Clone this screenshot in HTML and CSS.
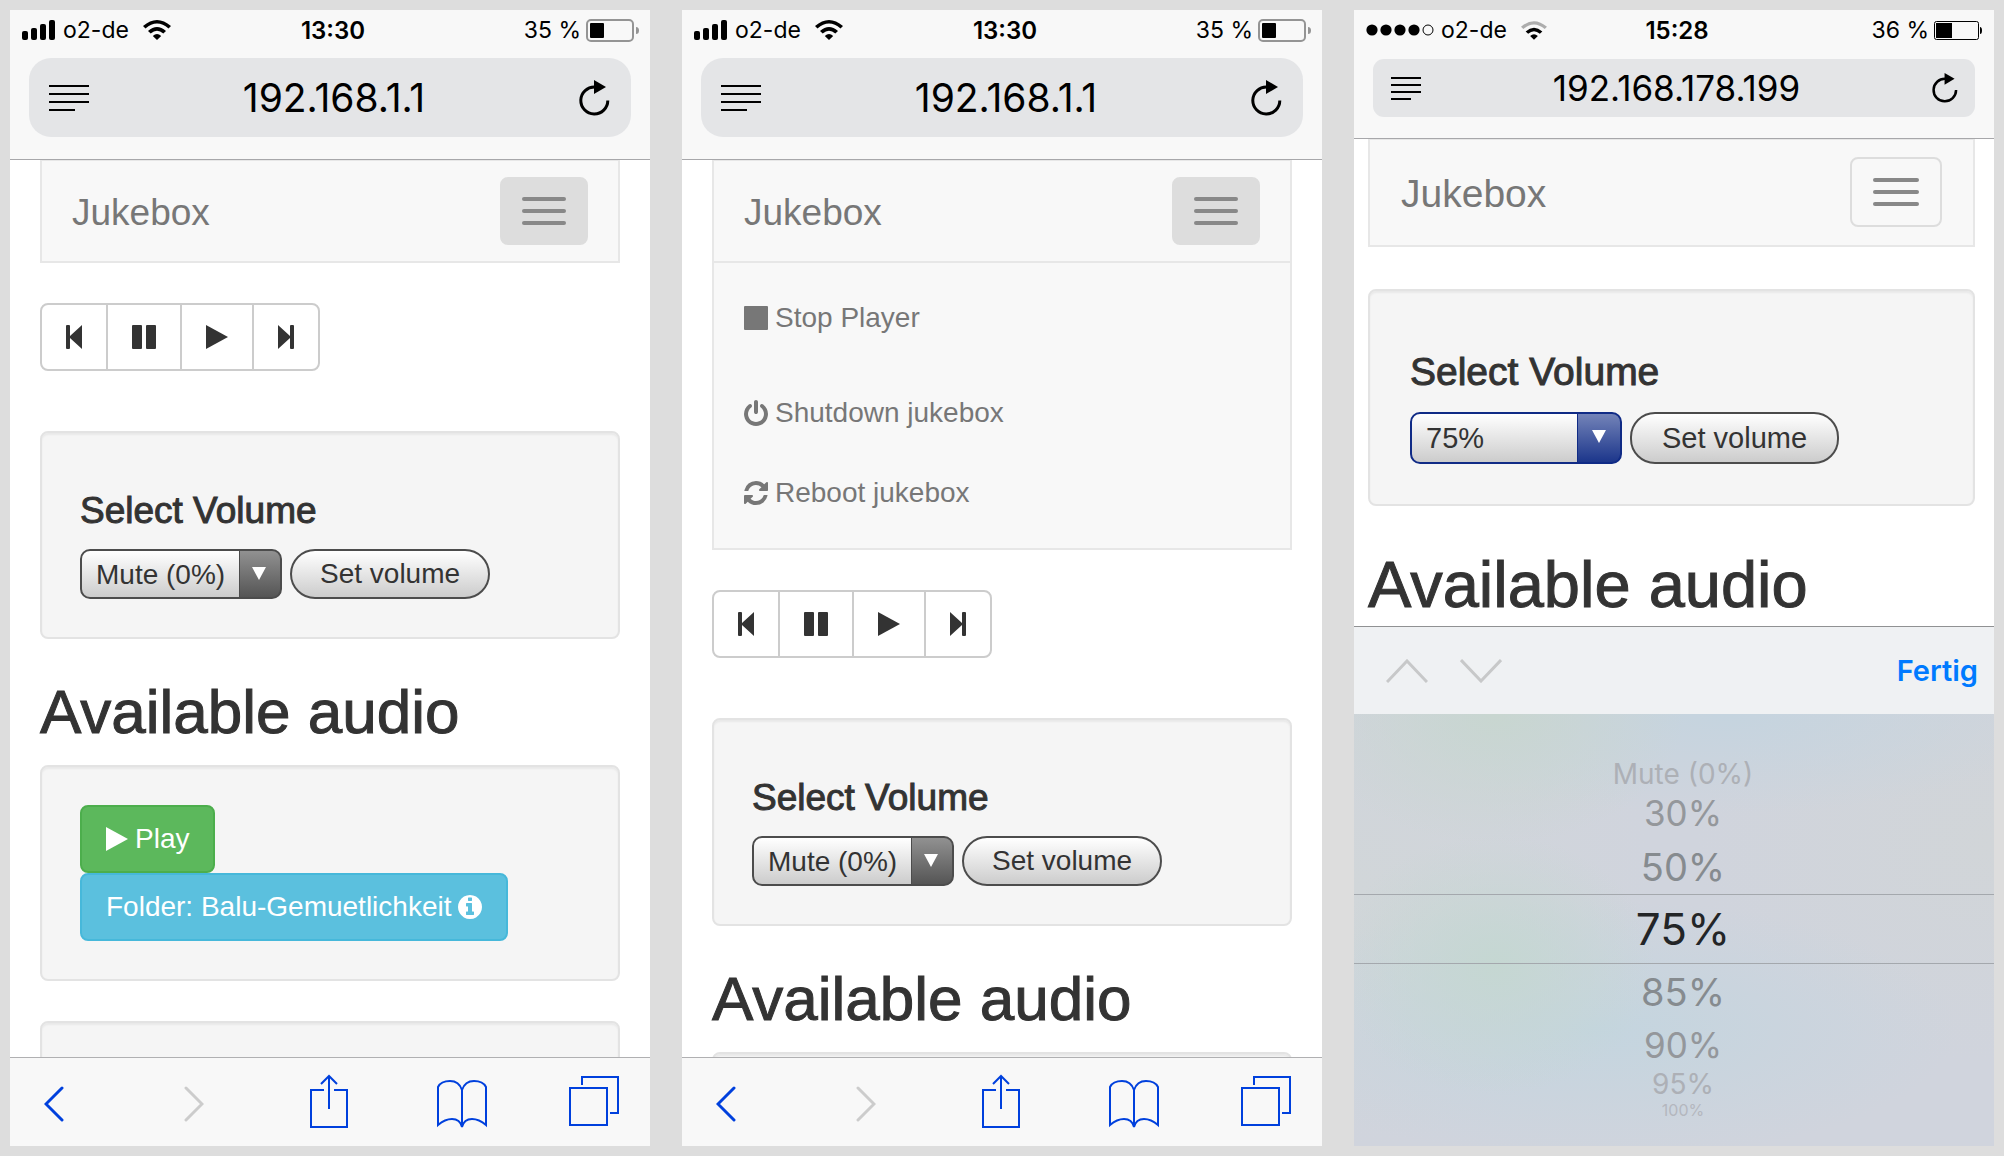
FILE: index.html
```html
<!DOCTYPE html>
<html lang="en">
<head>
<meta charset="utf-8">
<meta name="viewport" content="width=device-width, initial-scale=1">
<title>Jukebox</title>
<link rel="stylesheet" href="styles.css">
</head>
<body>
<svg class="sprite" aria-hidden="true">
  <symbol id="signal" viewBox="0 0 34 20"><rect x="0" y="11" width="6" height="9" rx="2"/><rect x="9" y="8" width="6" height="12" rx="2"/><rect x="18" y="4" width="6" height="16" rx="2"/><rect x="27" y="0" width="6" height="20" rx="2"/></symbol>
  <symbol id="dots" viewBox="0 0 68 12"><circle cx="6" cy="6" r="5.600"/><circle cx="20" cy="6" r="5.600"/><circle cx="34" cy="6" r="5.600"/><circle cx="48" cy="6" r="5.600"/><circle cx="62" cy="6" r="5" fill="none" stroke="currentColor"/></symbol>
  <symbol id="wifi" viewBox="0 0 28 20"><path d="M0 6Q14-6 28 6L25.500 8.500Q14-1.500 2.500 8.500ZM5 11Q14 3 23 11L20.300 13.500Q14 8 7.700 13.500ZM9.800 16Q14 12 18.200 16L14 20Z"/></symbol>
  <symbol id="wifi-low" viewBox="0 0 28 20"><path opacity=".3" d="M0 6Q14-6 28 6L25.500 8.500Q14-1.500 2.500 8.500Z"/><path d="M5 11Q14 3 23 11L20.300 13.500Q14 8 7.700 13.500ZM9.800 16Q14 12 18.200 16L14 20Z"/></symbol>
  <symbol id="battery" viewBox="0 0 53 23"><rect x="1" y="1" width="46" height="21" rx="4" fill="none" stroke="#949494" stroke-width="2"/><rect x="4" y="4" width="14" height="15" rx="1"/><path d="M50 8Q53 8 53 11.500Q53 15 50 15Z" fill="#949494"/></symbol>
  <symbol id="battery-thin" viewBox="0 0 49 19"><rect x=".5" y=".5" width="44" height="18" rx="2" fill="none" stroke="currentColor"/><rect x="2" y="2" width="16" height="15"/><path d="M46 6Q48 6 48 9.500Q48 13 46 13Z"/></symbol>
  <symbol id="reader" viewBox="0 0 40 28"><path d="M0 1h40v2H0zM0 9h40v2H0zM0 17h40v2H0zM0 25h26v2H0z"/></symbol>
  <symbol id="reader-small" viewBox="0 0 30 23"><path d="M0 0h30v2H0zM0 7h30v2H0zM0 14h30v2H0zM0 21h20v2H0z"/></symbol>
  <symbol id="reload" viewBox="0 0 31 36"><path d="M16 7A13.500 13.500 0 1 0 28.800 20.500" fill="none" stroke="currentColor" stroke-width="3"/><path d="M15 0L27 7L15 14Z"/></symbol>
  <symbol id="step-back" viewBox="0 0 16 24"><path d="M0 1Q0 0 1 0H3Q4 0 4 1V11L16 0V24L4 13V23Q4 24 3 24H1Q0 24 0 23Z"/></symbol>
  <symbol id="pause" viewBox="0 0 24 24"><rect width="10" height="24" rx="1"/><rect x="14" width="10" height="24" rx="1"/></symbol>
  <symbol id="play" viewBox="0 0 22 24"><path d="M0 0L22 12L0 24Z"/></symbol>
  <symbol id="step-fwd" viewBox="0 0 16 24"><path d="M16 1Q16 0 15 0H13Q12 0 12 1V11L0 0V24L12 13V23Q12 24 13 24H15Q16 24 16 23Z"/></symbol>
  <symbol id="stop" viewBox="0 0 24 24"><rect width="24" height="24" rx="1"/></symbol>
  <symbol id="power" viewBox="128 0 1536 1664"><path d="M1664 896q0 156-61 298t-164 245-245 164-298 61-298-61-245-164-164-245-61-298q0-182 80.500-343t226.500-270q43-32 95.500-25t83.500 50q32 42 24.500 94.500t-49.500 84.500q-98 74-151.500 181t-53.500 228q0 104 40.500 198.500t109.500 163.500 163.500 109.500 198.500 40.500 198.500-40.500 163.500-109.500 109.500-163.500 40.500-198.500q0-121-53.500-228t-151.500-181q-42-32-49.500-84.500t24.500-94.500q31-43 84-50t95 25q146 109 226.500 270t80.500 343zm-640-768v640q0 52-38 90t-90 38-90-38-38-90v-640q0-52 38-90t90-38 90 38 38 90z"/></symbol>
  <symbol id="refresh" viewBox="128 128 1536 1536"><path d="M1639 1056q0 5-1 7-64 268-268 434.500t-478 166.500q-146 0-282.500-55t-243.500-157l-129 129q-19 19-45 19t-45-19-19-45v-448q0-26 19-45t45-19h448q26 0 45 19t19 45-19 45l-137 137q71 66 161 102t187 36q134 0 250-65t186-179q11-17 53-117 8-23 30-23h192q13 0 22.500 9.500t9.500 22.500zm25-800v448q0 26-19 45t-45 19h-448q-26 0-45-19t-19-45 19-45l138-138q-148-137-349-137-134 0-250 65t-186 179q-11 17-53 117-8 23-30 23h-199q-13 0-22.500-9.500t-9.500-22.500v-7q65-268 270-434.500t480-166.500q146 0 284 55.500t245 156.500l130-129q19-19 45-19t45 19 19 45z"/></symbol>
  <symbol id="info" viewBox="128 128 1536 1536"><path d="M1152 1376v-160q0-14-9-23t-23-9h-96v-512q0-14-9-23t-23-9h-320q-14 0-23 9t-9 23v160q0 14 9 23t23 9h96v320h-96q-14 0-23 9t-9 23v160q0 14 9 23t23 9h448q14 0 23-9t9-23zm-128-896v-160q0-14-9-23t-23-9h-192q-14 0-23 9t-9 23v160q0 14 9 23t23 9h192q14 0 23-9t9-23zm640 416q0 209-103 385.500t-279.500 279.500-385.500 103-385.500-103-279.500-279.500-103-385.500 103-385.500 279.500-279.500 385.500-103 385.500 103 279.500 279.500 103 385.500z"/></symbol>
  <symbol id="back" viewBox="0 0 20 36"><path d="M18 2L2 18L18 34" fill="none" stroke="currentColor" stroke-width="3" stroke-linecap="round"/></symbol>
  <symbol id="forward" viewBox="0 0 20 36"><path d="M2 2L18 18L2 34" fill="none" stroke="currentColor" stroke-width="3" stroke-linecap="round"/></symbol>
  <symbol id="share" viewBox="0 0 38 54"><path d="M14 16H1V53H37V16H24M19 35V2M11 10L19 2L27 10" fill="none" stroke="currentColor" stroke-width="2"/></symbol>
  <symbol id="book" viewBox="0 0 50 49"><path d="M25 10V47M25 10Q22 1 13 1Q4 1 1 7V45Q8 39 15 39Q23 39 25 47Q27 39 35 39Q42 39 49 45V7Q46 1 37 1Q28 1 25 10" fill="none" stroke="currentColor" stroke-width="2"/></symbol>
  <symbol id="tabs" viewBox="0 0 50 50"><path d="M1 12H38V49H1ZM13 9V1H49V37H41" fill="none" stroke="currentColor" stroke-width="2"/></symbol>
  <symbol id="chev-up" viewBox="0 0 42 24"><path d="M1 23L21 2L41 23" fill="none" stroke="currentColor" stroke-width="3"/></symbol>
  <symbol id="chev-down" viewBox="0 0 42 24"><path d="M1 1L21 22L41 1" fill="none" stroke="currentColor" stroke-width="3"/></symbol>
  <symbol id="caret" viewBox="0 0 14 13"><path d="M0 0H14L7 13Z"/></symbol>
</svg>

<main class="phones">
  <section class="phone" aria-label="Player">
    <header class="browser">
      <div class="status">
        <div class="status-side"><svg class="icon" width="34" height="20"><use href="#signal"/></svg><span>o2-de</span><svg class="icon wifi" width="28" height="20"><use href="#wifi"/></svg></div>
        <time class="clock">13:30</time>
        <div class="status-side status-end"><span>35 %</span><svg class="icon" width="53" height="23"><use href="#battery"/></svg></div>
      </div>
      <div class="address">
        <button class="plain" aria-label="Reader view"><svg class="icon" width="40" height="28"><use href="#reader"/></svg></button>
        <span>192.168.1.1</span>
        <button class="plain" aria-label="Reload"><svg class="icon" width="31" height="36"><use href="#reload"/></svg></button>
      </div>
    </header>
    <div class="page">
      <nav class="navbar">
        <div class="navbar-head">
          <a class="brand" href="#">Jukebox</a>
          <button class="toggle toggle-active" aria-label="Toggle navigation"><span class="bar"></span><span class="bar"></span><span class="bar"></span></button>
        </div>
      </nav>
      <div class="controls">
        <button class="control" aria-label="Previous"><svg class="icon" width="16" height="24"><use href="#step-back"/></svg></button>
        <button class="control" aria-label="Pause"><svg class="icon" width="24" height="24"><use href="#pause"/></svg></button>
        <button class="control" aria-label="Play"><svg class="icon" width="22" height="24"><use href="#play"/></svg></button>
        <button class="control" aria-label="Next"><svg class="icon" width="16" height="24"><use href="#step-fwd"/></svg></button>
      </div>
      <form class="well">
        <label class="well-title" for="volume-1">Select Volume</label>
        <div class="volume">
          <span class="select-wrap"><select class="select" id="volume-1"><option>Mute (0%)</option><option>30%</option><option>50%</option><option>75%</option></select><svg class="caret" width="14" height="13" aria-hidden="true"><use href="#caret"/></svg></span>
          <button class="set" type="button">Set volume</button>
        </div>
      </form>
      <h2 class="heading">Available audio</h2>
      <div class="well well-audio">
        <button class="btn btn-play"><svg class="icon" width="22" height="24"><use href="#play"/></svg>Play</button>
        <button class="btn btn-folder">Folder: Balu-Gemuetlichkeit<svg class="icon" width="24" height="24"><use href="#info"/></svg></button>
      </div>
      <div class="well well-next"></div>
    </div>
    <footer class="toolbar">
      <button class="plain tool" aria-label="Back"><svg class="icon" width="20" height="36"><use href="#back"/></svg></button>
      <button class="plain tool tool-off" aria-label="Forward" disabled><svg class="icon" width="20" height="36"><use href="#forward"/></svg></button>
      <button class="plain tool tool-raised" aria-label="Share"><svg class="icon" width="38" height="54"><use href="#share"/></svg></button>
      <button class="plain tool" aria-label="Bookmarks"><svg class="icon" width="50" height="49"><use href="#book"/></svg></button>
      <button class="plain tool tool-raised" aria-label="Tabs"><svg class="icon" width="50" height="50"><use href="#tabs"/></svg></button>
    </footer>
  </section>

  <section class="phone" aria-label="Menu">
    <header class="browser">
      <div class="status">
        <div class="status-side"><svg class="icon" width="34" height="20"><use href="#signal"/></svg><span>o2-de</span><svg class="icon wifi" width="28" height="20"><use href="#wifi"/></svg></div>
        <time class="clock">13:30</time>
        <div class="status-side status-end"><span>35 %</span><svg class="icon" width="53" height="23"><use href="#battery"/></svg></div>
      </div>
      <div class="address">
        <button class="plain" aria-label="Reader view"><svg class="icon" width="40" height="28"><use href="#reader"/></svg></button>
        <span>192.168.1.1</span>
        <button class="plain" aria-label="Reload"><svg class="icon" width="31" height="36"><use href="#reload"/></svg></button>
      </div>
    </header>
    <div class="page">
      <nav class="navbar">
        <div class="navbar-head">
          <a class="brand" href="#">Jukebox</a>
          <button class="toggle toggle-active" aria-label="Toggle navigation"><span class="bar"></span><span class="bar"></span><span class="bar"></span></button>
        </div>
        <div class="menu">
          <ul class="menu-list">
            <li><a class="menu-link" href="#"><svg class="icon" width="24" height="24"><use href="#stop"/></svg>Stop Player</a></li>
          </ul>
          <ul class="menu-list">
            <li><a class="menu-link" href="#"><svg class="icon" width="24" height="26"><use href="#power"/></svg>Shutdown jukebox</a></li>
            <li><a class="menu-link" href="#"><svg class="icon" width="24" height="24"><use href="#refresh"/></svg>Reboot jukebox</a></li>
          </ul>
        </div>
      </nav>
      <div class="controls">
        <button class="control" aria-label="Previous"><svg class="icon" width="16" height="24"><use href="#step-back"/></svg></button>
        <button class="control" aria-label="Pause"><svg class="icon" width="24" height="24"><use href="#pause"/></svg></button>
        <button class="control" aria-label="Play"><svg class="icon" width="22" height="24"><use href="#play"/></svg></button>
        <button class="control" aria-label="Next"><svg class="icon" width="16" height="24"><use href="#step-fwd"/></svg></button>
      </div>
      <form class="well">
        <label class="well-title" for="volume-2">Select Volume</label>
        <div class="volume">
          <span class="select-wrap"><select class="select" id="volume-2"><option>Mute (0%)</option><option>30%</option><option>50%</option><option>75%</option></select><svg class="caret" width="14" height="13" aria-hidden="true"><use href="#caret"/></svg></span>
          <button class="set" type="button">Set volume</button>
        </div>
      </form>
      <h2 class="heading">Available audio</h2>
      <div class="well well-next"></div>
    </div>
    <footer class="toolbar">
      <button class="plain tool" aria-label="Back"><svg class="icon" width="20" height="36"><use href="#back"/></svg></button>
      <button class="plain tool tool-off" aria-label="Forward" disabled><svg class="icon" width="20" height="36"><use href="#forward"/></svg></button>
      <button class="plain tool tool-raised" aria-label="Share"><svg class="icon" width="38" height="54"><use href="#share"/></svg></button>
      <button class="plain tool" aria-label="Bookmarks"><svg class="icon" width="50" height="49"><use href="#book"/></svg></button>
      <button class="plain tool tool-raised" aria-label="Tabs"><svg class="icon" width="50" height="50"><use href="#tabs"/></svg></button>
    </footer>
  </section>

  <section class="phone phone-picker" aria-label="Volume picker">
    <header class="browser">
      <div class="status">
        <div class="status-side"><svg class="icon" width="68" height="12"><use href="#dots"/></svg><span>o2-de</span><svg class="icon wifi" width="26" height="19"><use href="#wifi-low"/></svg></div>
        <time class="clock">15:28</time>
        <div class="status-side status-end"><span>36 %</span><svg class="icon" width="49" height="19"><use href="#battery-thin"/></svg></div>
      </div>
      <div class="address">
        <button class="plain" aria-label="Reader view"><svg class="icon" width="30" height="23"><use href="#reader-small"/></svg></button>
        <span>192.168.178.199</span>
        <button class="plain" aria-label="Reload"><svg class="icon" width="26" height="30"><use href="#reload"/></svg></button>
      </div>
    </header>
    <div class="page">
      <nav class="navbar">
        <div class="navbar-head">
          <a class="brand" href="#">Jukebox</a>
          <button class="toggle" aria-label="Toggle navigation"><span class="bar"></span><span class="bar"></span><span class="bar"></span></button>
        </div>
      </nav>
      <form class="well">
        <label class="well-title" for="volume-3">Select Volume</label>
        <div class="volume">
          <span class="select-wrap"><select class="select" id="volume-3"><option>75%</option><option>85%</option><option>90%</option></select><svg class="caret" width="14" height="13" aria-hidden="true"><use href="#caret"/></svg></span>
          <button class="set" type="button">Set volume</button>
        </div>
      </form>
      <h2 class="heading">Available audio</h2>
    </div>
    <div class="keyboard-bar">
      <button class="plain" aria-label="Previous field" disabled><svg class="icon" width="42" height="24"><use href="#chev-up"/></svg></button>
      <button class="plain" aria-label="Next field" disabled><svg class="icon" width="42" height="24"><use href="#chev-down"/></svg></button>
      <button class="plain done">Fertig</button>
    </div>
    <div class="wheel" role="radiogroup" aria-label="Volume">
      <label class="option option-far"><input class="choice" type="radio" name="wheel">Mute (0%)</label>
      <label class="option option-mid"><input class="choice" type="radio" name="wheel">30%</label>
      <label class="option option-near"><input class="choice" type="radio" name="wheel">50%</label>
      <label class="option option-current"><input class="choice" type="radio" name="wheel" checked>75%</label>
      <label class="option option-near"><input class="choice" type="radio" name="wheel">85%</label>
      <label class="option option-mid"><input class="choice" type="radio" name="wheel">90%</label>
      <label class="option option-far"><input class="choice" type="radio" name="wheel">95%</label>
      <label class="option option-edge"><input class="choice" type="radio" name="wheel">100%</label>
    </div>
  </section>
</main>
</body>
</html>
```
FILE: styles.css
```css
* { box-sizing: border-box; }

body {
  margin: 0;
  background: #ddd;
  color: #333;
  font-family: "Liberation Sans", Arial, sans-serif;
}

button, select { font: inherit; color: inherit; margin: 0; }

.sprite { position: absolute; width: 0; height: 0; }
.icon { display: block; flex: none; fill: currentColor; }

.phones {
  display: grid;
  grid-template-columns: repeat(3, minmax(0, 1fr));
  gap: 32px;
  height: 100vh;
  padding: 10px;
}

.phone {
  --text: 28px;
  --title: 37px;
  --heading: 62px;
  --select-width: 202px;
  --arrow-width: 40px;
  --control-height: 50px;
  --line: #4c4c4c;
  --arrow-top: #919191;
  --arrow-bottom: #555;
  display: flex;
  flex-direction: column;
  min-height: 0;
  overflow: hidden;
  background: #fff;
}

.phone-picker {
  --text: 29px;
  --title: 39px;
  --heading: 65px;
  --select-width: 212px;
  --arrow-width: 42px;
  --control-height: 52px;
  --line: #102b86;
  --arrow-top: #7383b8;
  --arrow-bottom: #1c368b;
}

.plain {
  display: block;
  padding: 0;
  border: 0;
  background: none;
}

/* Browser chrome */
.browser {
  position: relative;
  z-index: 1;
  flex: none;
  padding-bottom: 22px;
  border-bottom: 1px solid #a7a7aa;
  background: #f8f8f8;
  color: #000;
  font-family: Inter, "Liberation Sans", sans-serif;
}

.status {
  display: grid;
  grid-template-columns: 1fr auto 1fr;
  align-items: center;
  height: 40px;
  padding: 0 11px 0 12px;
  font-size: 23px;
}

.status-side { display: flex; align-items: center; gap: 7px; }
.status-end { justify-content: flex-end; gap: 5px; }
.wifi { margin-left: 7px; }
.clock { padding-left: 5px; font-size: 24px; font-weight: 600; }

.address {
  display: flex;
  align-items: center;
  justify-content: space-between;
  height: 79px;
  margin: 8px 19px 0;
  padding: 0 21px 0 20px;
  border-radius: 22px;
  background: #e4e5e7;
  font-size: 39px;
}

.phone-picker .address {
  height: 58px;
  margin-top: 9px;
  padding: 0 17px 0 18px;
  border-radius: 11px;
  font-size: 35px;
}

.phone-picker .browser { padding-bottom: 21px; }

/* Web page */
.page {
  flex: 1;
  min-height: 0;
  margin-top: -1px;
  padding: 0 30px;
  overflow: hidden;
}

.phone-picker .page { padding: 0 19px 0 14px; }

.navbar {
  border: 2px solid #e7e7e7;
  background: #f8f8f8;
  color: #777;
}

.navbar-head {
  display: flex;
  align-items: center;
  justify-content: space-between;
  padding: 16px 30px;
}

.phone-picker .navbar-head { padding: 17px 31px 18px; }

.brand {
  padding-top: 3px;
  color: inherit;
  font-size: var(--title);
  line-height: 40px;
  text-decoration: none;
}

.toggle {
  display: grid;
  gap: 8px;
  padding: 18px 20px;
  border: 2px solid #ddd;
  border-radius: 8px;
  background: transparent;
}

.toggle-active { background: #ddd; }
.phone-picker .toggle { padding: 19px 21px; }
.bar { width: 44px; height: 4px; border-radius: 2px; background: #888; }
.phone-picker .bar { width: 46px; }

.menu { padding-bottom: 15px; border-top: 2px solid #e7e7e7; }
.menu-list { margin: 15px 0 0; padding: 0; list-style: none; }

.menu-link {
  display: flex;
  align-items: center;
  gap: 7px;
  padding: 20px 30px;
  color: inherit;
  font-size: var(--text);
  line-height: 40px;
  text-decoration: none;
}

.controls { display: flex; margin: 40px 0 60px; }

.control {
  padding: 20px 24px;
  border: 2px solid #ccc;
  background: #fff;
}

.control + .control { margin-left: -2px; }
.control:first-child { border-radius: 8px 0 0 8px; }
.control:last-child { border-radius: 0 8px 8px 0; }

.well {
  padding: 38px;
  border: 2px solid #e3e3e3;
  border-radius: 8px;
  background: #f5f5f5;
  box-shadow: inset 0 2px 2px rgba(0, 0, 0, .05);
}

.phone-picker .well { margin-top: 42px; padding: 40px; }
.well-next { height: 208px; margin-top: 40px; }
.heading + .well-next { margin-top: 0; }

.well-title {
  display: block;
  padding: 20px 0 18px;
  font-size: var(--title);
  line-height: 40px;
  -webkit-text-stroke: 1px currentColor;
}

.phone-picker .well-title { padding-top: 21px; padding-bottom: 20px; }

.volume { display: flex; gap: 8px; }
.select-wrap { position: relative; width: var(--select-width); }

.select {
  display: block;
  width: 100%;
  height: var(--control-height);
  padding: 0 0 0 14px;
  border: 2px solid var(--line);
  border-radius: 10px;
  appearance: none;
  background:
    linear-gradient(var(--line), var(--line)) right var(--arrow-width) top / 1px 100% no-repeat,
    linear-gradient(var(--arrow-top), var(--arrow-bottom)) right / var(--arrow-width) 100% no-repeat,
    linear-gradient(#fff, #ccc);
  font-size: var(--text);
}

.caret {
  position: absolute;
  top: 18px;
  right: 16px;
  fill: #fff;
  pointer-events: none;
}

.set {
  height: var(--control-height);
  padding: 0 28px;
  border: 2px solid #4c4c4c;
  border-radius: 25px;
  background: linear-gradient(#fff, #ccc);
  font-size: var(--text);
}

.phone-picker .set { padding: 0 30px; }

.heading {
  margin: 40px 0 20px;
  font-size: var(--heading);
  font-weight: 400;
  line-height: 66px;
  white-space: nowrap;
  -webkit-text-stroke: 1px currentColor;
}

.phone-picker .heading { margin-top: 46px; }

.well-audio { display: flex; flex-direction: column; align-items: flex-start; }

.btn {
  display: flex;
  align-items: center;
  gap: 7px;
  padding: 12px 24px;
  border: 2px solid;
  border-radius: 8px;
  color: #fff;
  font-size: var(--text);
  line-height: 40px;
}

.btn-play { border-color: #4cae4c; background: #5cb85c; }
.btn-folder { border-color: #46b8da; background: #5bc0de; }

/* Bottom toolbar */
.toolbar {
  display: grid;
  grid-template-columns: 140fr 135fr 133fr 132fr 50px;
  align-items: center;
  flex: none;
  height: 89px;
  padding: 4px 31px 0 19px;
  border-top: 1px solid #b0b0b2;
  background: #f8f8f8;
  color: #0040dd;
}

.tool { display: grid; justify-items: center; width: 50px; }
.tool-off { color: #ccc; }
.tool-raised { padding-bottom: 7px; }

/* Volume wheel */
.keyboard-bar {
  display: flex;
  align-items: center;
  gap: 32px;
  flex: none;
  height: 88px;
  padding: 0 16px 0 32px;
  border-top: 1px solid #909193;
  background: #eff1f3;
  color: #c7c8c9;
}

.done {
  margin-left: auto;
  color: #007aff;
  font-family: Inter, "Liberation Sans", sans-serif;
  font-size: 29px;
  font-weight: 600;
}

.wheel {
  display: flex;
  flex-direction: column;
  flex: none;
  height: 432px;
  padding-top: 47px;
  background:
    radial-gradient(190px 130px at 22% 0, #c8d6d0, transparent),
    radial-gradient(330px 100px at 58% 0, #c5d4df, transparent),
    radial-gradient(160px 130px at 22% 58%, #c5d7d2, transparent),
    radial-gradient(360px 130px at 38% 73%, #c4d5df, transparent),
    radial-gradient(300px 220px at 100% 30%, #d1d5d8, transparent),
    radial-gradient(300px 260px at 0 40%, #d1d6d9, transparent),
    #d0d4dd;
  color: #232527;
  font-family: Inter, "Liberation Sans", sans-serif;
}

.option {
  display: flex;
  align-items: center;
  justify-content: center;
  flex: none;
  padding-left: 18px;
}

.choice { position: absolute; appearance: none; margin: 0; opacity: 0; }
.option-far { height: 26px; color: #adb0b6; font-size: 28px; }
.option-mid { height: 52px; color: #94979b; font-size: 35px; }
.option-near { height: 55px; color: #868b8f; font-size: 38px; }

.option-current {
  height: 70px;
  border: solid #a4a8ad;
  border-width: 1px 0;
  font-size: 44px;
}

.option-edge { height: 26px; color: #b4b7be; font-size: 16px; line-height: 16px; }
```
